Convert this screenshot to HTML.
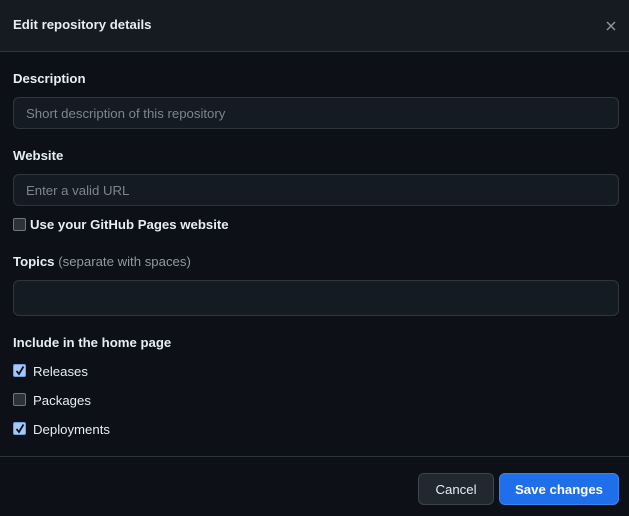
<!DOCTYPE html>
<html><head><style>
*{box-sizing:border-box;margin:0;padding:0}
body{width:629px;height:516px;background:#0d1117;font-family:"Liberation Sans",sans-serif;color:#e6edf3;font-size:13.2px;position:relative;overflow:hidden}
.hdr{position:absolute;left:0;top:0;width:629px;height:52px;background:#161b22;border-bottom:1px solid #30363d}
.a{position:absolute;white-space:nowrap}
.b{font-weight:bold}
.inp{position:absolute;left:13px;width:606px;background:#151b23;border:1px solid #30363d;border-radius:6px;color:#7d8590;padding-left:12px;font-size:13.2px;display:flex;align-items:center}
.cb{position:absolute;left:13px;width:13px;height:13px;border-radius:2px}
.on{background:#a5c8f8;border:1px solid #6e9fe0}
.off{background:#2d3138;border:1px solid #6e7681}
.on svg{position:absolute;left:1px;top:0}
.foot{position:absolute;left:0;top:456px;width:629px;border-top:1px solid #30363d}
.btn{position:absolute;top:473px;height:32px;border-radius:6px;font-size:13.2px;display:flex;align-items:center;justify-content:center}
</style></head><body>
<div class="hdr"></div>
<div class="a b" style="left:13px;top:17px">Edit repository details</div>
<svg class="a" style="left:605px;top:20px" width="12" height="12" viewBox="0 0 12 12"><path d="M2 2L10 10M10 2L2 10" stroke="#9198a1" stroke-width="1.4"/></svg>
<div class="a b" style="left:13px;top:71px">Description</div>
<div class="inp" style="top:97px;height:32px">Short description of this repository</div>
<div class="a b" style="left:13px;top:148px">Website</div>
<div class="inp" style="top:174px;height:32px">Enter a valid URL</div>
<div class="cb off" style="top:218px"></div>
<div class="a b" style="left:30px;top:217px">Use your GitHub Pages website</div>
<div class="a" style="left:13px;top:254px"><b>Topics</b> <span style="color:#9198a1">(separate with spaces)</span></div>
<div class="inp" style="top:280px;height:36px"></div>
<div class="a b" style="left:13px;top:335px">Include in the home page</div>
<div class="cb on" style="top:364px"><svg width="10" height="11" viewBox="0 0 10 11"><path d="M1.5 6L4 9L8.5 1.5" stroke="#0d1117" stroke-width="1.8" fill="none"/></svg></div>
<div class="a" style="left:33px;top:364px">Releases</div>
<div class="cb off" style="top:393px"></div>
<div class="a" style="left:33px;top:393px">Packages</div>
<div class="cb on" style="top:422px"><svg width="10" height="11" viewBox="0 0 10 11"><path d="M1.5 6L4 9L8.5 1.5" stroke="#0d1117" stroke-width="1.8" fill="none"/></svg></div>
<div class="a" style="left:33px;top:422px">Deployments</div>
<div class="foot"></div>
<div class="btn" style="left:418px;width:76px;background:#212830;border:1px solid #3d444d;color:#e6edf3">Cancel</div>
<div class="btn b" style="left:499px;width:120px;background:#1f6feb;border:1px solid #3b82f0;color:#fff">Save changes</div>
</body></html>
